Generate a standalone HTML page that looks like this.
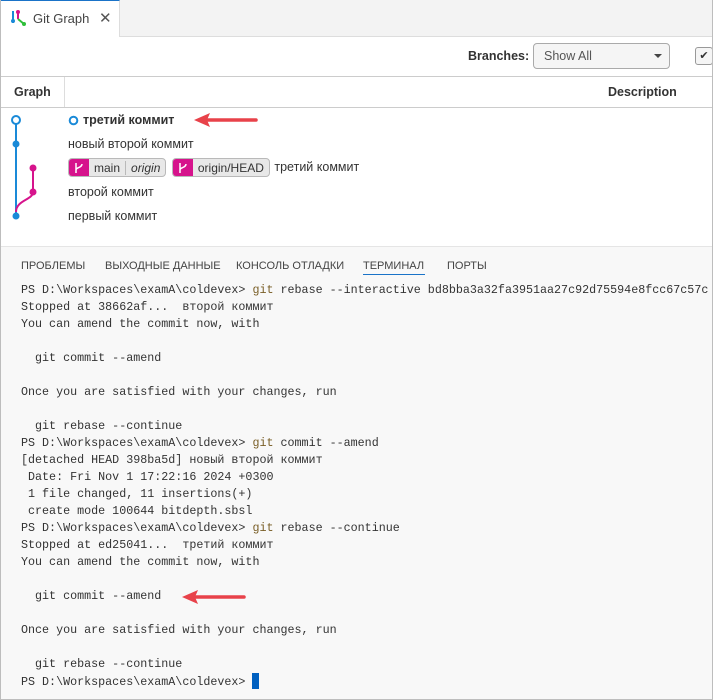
<!DOCTYPE html>
<html><head><meta charset="utf-8"><style>
*{margin:0;padding:0;box-sizing:border-box}
body{width:713px;height:700px;overflow:hidden;background:#fff;font-family:"Liberation Sans","DejaVu Sans",sans-serif;position:relative;color:#333}
.abs{position:absolute}
.frame{left:0;top:0;width:713px;height:700px;border:1px solid #bdbdbd;border-top:none}
.tabbar{left:1px;top:0;width:712px;height:37px;background:#f3f3f3;border-bottom:1px solid #ddd}
.tab{left:1px;top:0;width:119px;height:37px;background:#fff;border-top:1px solid #1a73c8;border-right:1px solid #ddd}
.tb{font-size:13px;color:#444}
.row{font-size:12.5px;color:#333;left:68px}
.ref{display:inline-flex;height:19px;border:1px solid #b9b9b9;border-radius:4px;background:#e8e8e8;font-size:12px;align-items:center;overflow:hidden;vertical-align:middle}
.ref .ic{background:#d6138c;width:20px;height:19px;display:flex;align-items:center;justify-content:center}
.ref span{padding:0 5px}
.term{left:1px;top:246px;width:711px;height:453px;background:#f8f8f8;border-top:1px solid #e5e5e5}
.tabs{font-size:11px;color:#444;top:260px}
pre{position:absolute;left:21px;top:282px;font-family:"Liberation Mono","DejaVu Sans Mono",monospace;font-size:11.7px;line-height:17px;color:#333}
.g{color:#795e26}
</style></head><body>
<div class="abs tabbar"></div>
<div class="abs tab"></div>
<svg class="abs" style="left:10px;top:9px" width="18" height="18" viewBox="0 0 18 18">
<line x1="3" y1="2" x2="3" y2="14" stroke="#1a8ad8" stroke-width="2"/>
<line x1="8" y1="4" x2="8" y2="10" stroke="#d6138c" stroke-width="2"/>
<circle cx="8" cy="3" r="2" fill="#d6138c"/><circle cx="3" cy="12" r="2" fill="#1a8ad8"/>
<line x1="8" y1="10" x2="14" y2="15" stroke="#2fbf3a" stroke-width="2"/><circle cx="14" cy="15" r="2" fill="#2fbf3a"/>
</svg>
<div class="abs tb" style="left:33px;top:11px">Git Graph</div>
<div class="abs" style="left:99px;top:9px;font-size:15px;color:#555">✕</div>
<div class="abs" style="left:1px;top:76px;width:712px;height:1px;background:#ccc"></div>
<div class="abs" style="left:468px;top:49px;font-size:12.5px;font-weight:bold;color:#333">Branches:</div>
<div class="abs" style="left:533px;top:43px;width:137px;height:26px;border:1px solid #aaa;border-radius:4px;background:#f5f5f5;font-size:12.5px;color:#555;padding:5px 10px">Show All</div>
<div class="abs" style="left:654px;top:54px;border-left:4px solid transparent;border-right:4px solid transparent;border-top:4px solid #444"></div>
<div class="abs" style="left:695px;top:47px;width:18px;height:18px;border:1px solid #999;border-radius:3px;background:#f5f5f5;font-size:11px;text-align:center;line-height:16px">✔</div>
<div class="abs" style="left:1px;top:107px;width:712px;height:1px;background:#ccc"></div>
<div class="abs" style="left:64px;top:77px;width:1px;height:30px;background:#ddd"></div>
<div class="abs" style="left:14px;top:85px;font-size:12.5px;font-weight:bold">Graph</div>
<div class="abs" style="left:608px;top:85px;font-size:12.5px;font-weight:bold">Description</div>
<svg class="abs" style="left:0;top:108px" width="60" height="130">
<line x1="16" y1="12" x2="16" y2="108" stroke="#1a8ad8" stroke-width="2"/>
<path d="M33 84 C33 92 16 92 16 104" fill="none" stroke="#d6138c" stroke-width="2"/>
<line x1="33" y1="60" x2="33" y2="84" stroke="#d6138c" stroke-width="2"/>
<circle cx="16" cy="12" r="4" fill="#fff" stroke="#1a8ad8" stroke-width="2"/>
<circle cx="16" cy="36" r="3.5" fill="#1a8ad8"/>
<circle cx="33" cy="60" r="3.5" fill="#d6138c"/>
<circle cx="33" cy="84" r="3.5" fill="#d6138c"/>
<circle cx="16" cy="108" r="3.5" fill="#1a8ad8"/>
</svg>
<svg class="abs" style="left:68px;top:115px" width="11" height="11"><circle cx="5.5" cy="5.5" r="3.8" fill="none" stroke="#1a8ad8" stroke-width="2"/></svg>
<div class="abs row" style="left:83px;top:113px;font-weight:bold">третий коммит</div>
<svg class="abs" style="left:190px;top:110px" width="70" height="20"><path d="M16 10 L66 10" stroke="#e8424a" stroke-width="3.5" stroke-linecap="round"/><path d="M4 10 L20 3 L17 10 L20 17 Z" fill="#e8424a"/></svg>
<div class="abs row" style="top:137px">новый второй коммит</div>
<div class="abs row" style="top:158px;white-space:nowrap">
<span class="ref"><div class="ic"><svg width="10" height="12"><path d="M2 1v10M2 8c0-3 6-2 6-6" stroke="#fff" stroke-width="1.5" fill="none"/></svg></div><span>main</span><span style="border-left:1px solid #b9b9b9;font-style:italic">origin</span></span>
<span class="ref" style="margin-left:2px"><div class="ic"><svg width="10" height="12"><path d="M2 1v10M2 8c0-3 6-2 6-6" stroke="#fff" stroke-width="1.5" fill="none"/></svg></div><span>origin/HEAD</span></span>
<span style="margin-left:1px">третий коммит</span></div>
<div class="abs row" style="top:185px">второй коммит</div>
<div class="abs row" style="top:209px">первый коммит</div>
<div class="abs term"></div>
<div class="abs tabs" style="left:21px">ПРОБЛЕМЫ</div>
<div class="abs tabs" style="left:105px">ВЫХОДНЫЕ ДАННЫЕ</div>
<div class="abs tabs" style="left:236px">КОНСОЛЬ ОТЛАДКИ</div>
<div class="abs tabs" style="left:363px">ТЕРМИНАЛ</div>
<div class="abs" style="left:363px;top:274px;width:62px;height:1px;background:#1a73c8"></div>
<div class="abs tabs" style="left:447px">ПОРТЫ</div>
<pre>PS D:\Workspaces\examA\coldevex> <span class="g">git</span> rebase --interactive bd8bba3a32fa3951aa27c92d75594e8fcc67c57c
Stopped at 38662af...  второй коммит
You can amend the commit now, with

  git commit --amend

Once you are satisfied with your changes, run

  git rebase --continue
PS D:\Workspaces\examA\coldevex> <span class="g">git</span> commit --amend
[detached HEAD 398ba5d] новый второй коммит
 Date: Fri Nov 1 17:22:16 2024 +0300
 1 file changed, 11 insertions(+)
 create mode 100644 bitdepth.sbsl
PS D:\Workspaces\examA\coldevex> <span class="g">git</span> rebase --continue
Stopped at ed25041...  третий коммит
You can amend the commit now, with

  git commit --amend

Once you are satisfied with your changes, run

  git rebase --continue
PS D:\Workspaces\examA\coldevex> <span style="display:inline-block;width:7px;height:16px;background:#0060c0;vertical-align:-4px"></span></pre>
<svg class="abs" style="left:178px;top:587px" width="70" height="20"><path d="M16 10 L66 10" stroke="#e8424a" stroke-width="3.5" stroke-linecap="round"/><path d="M4 10 L20 3 L17 10 L20 17 Z" fill="#e8424a"/></svg>
<div class="abs frame"></div>
</body></html>
